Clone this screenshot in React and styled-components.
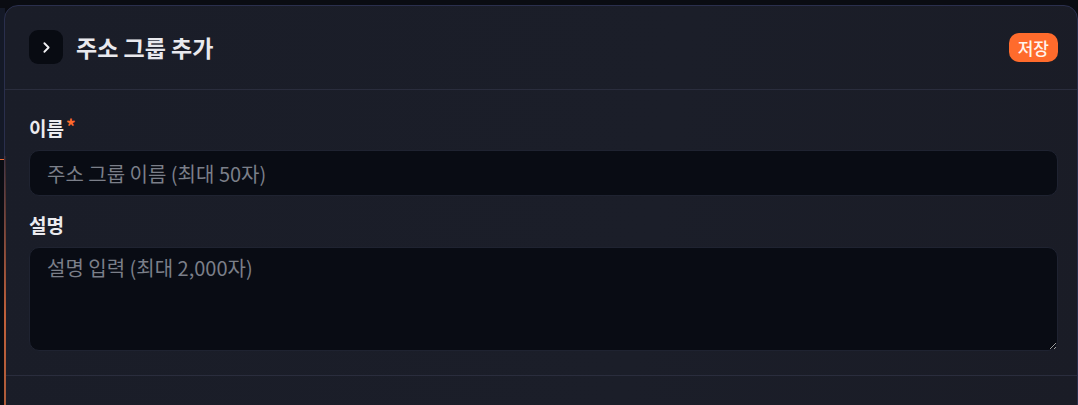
import React from 'react';
import styled, { createGlobalStyle } from 'styled-components';
import { ChevronRight } from 'lucide-react';

const Global = createGlobalStyle`
  html, body {
    margin: 0;
    padding: 0;
    background: #0a0c12;
    height: 405px;
    overflow: hidden;
  }
  * { box-sizing: border-box; }
  body {
    font-family: "Noto Sans CJK KR", "Noto Sans", sans-serif;
  }
`;

const Stage = styled.div`
  position: relative;
  width: 1078px;
  height: 405px;
  padding: 5px 0 0 4px;
`;

// piece of the page that sits behind the panel
const Behind = styled.div`
  position: absolute;
  left: 0;
  top: 8px;
  width: 5px;
  height: 152px;
  background: #141927;
  border-bottom: 1px solid #f06a30;
`;

const Panel = styled.section`
  position: relative;
  height: 420px;
  background: linear-gradient(100deg, #1a1d28 0%, #1b1e29 60%, #1a1c26 100%);
  border: 1px solid #2a2f4d;
  border-radius: 14px;
  &::before {
    content: '';
    position: absolute;
    left: -1px;
    top: 150px;
    width: 2px;
    bottom: 0;
    background: linear-gradient(180deg, rgba(240,106,48,0.1), #c0603a 60%, #a85a3a);
  }
`;

const Header = styled.header`
  display: flex;
  align-items: center;
  justify-content: space-between;
  padding: 24px 19px 25px 24px;
  border-bottom: 1px solid #2a2d3d;
`;

const TitleRow = styled.div`
  display: flex;
  align-items: center;
  gap: 13px;
`;

const IconBox = styled.div`
  width: 34px;
  height: 34px;
  border-radius: 9px;
  background: #080b12;
  display: flex;
  align-items: center;
  justify-content: center;
  color: #f2f2f5;
`;

const Title = styled.h2`
  margin: 0;
  font-size: 23px;
  font-weight: 700;
  line-height: 30px;
  color: #e9e9ee;
`;

const SaveButton = styled.button`
  border: none;
  background: #ff6b2c;
  color: #fff4ee;
  font-family: inherit;
  font-size: 17px;
  font-weight: 500;
  height: 29px;
  padding: 0 9px;
  border-radius: 10px;
`;

const Body = styled.div`
  display: flex;
  flex-direction: column;
  padding: 26px 19px 24px 24px;
  border-bottom: 1px solid #2a2d3d;
`;

const Label = styled.label`
  display: flex;
  align-items: center;
  gap: 2px;
  font-size: 19px;
  font-weight: 700;
  line-height: 24px;
  height: 24px;
  color: #ebebef;
  margin-top: ${p => (p.$first ? '0' : '17px')};
  margin-bottom: 10px;
`;

const Required = styled.span`
  color: #ff6b2c;
  font-size: 19px;
  margin-top: -4px;
`;

const fieldBase = `
  display: block;
  width: 100%;
  background: #090c14;
  border: 1px solid #1f2331;
  border-radius: 10px;
  color: #e0e0e6;
  font-family: "Noto Sans CJK KR", "Noto Sans", sans-serif;
  font-size: 20px;
  outline: none;
  padding: 0 17px;
  &::placeholder { color: #7b7f89; }
`;

const Input = styled.input`
  ${fieldBase}
  height: 46px;
  flex: none;
`;

const TextArea = styled.textarea`
  ${fieldBase}
  height: 104px;
  flex: none;
  padding-top: 6px;
  line-height: 28px;
  resize: vertical;
`;

export default function App() {
  return (
    <>
      <Global />
      <Stage>
        <Behind />
        <Panel>
          <Header>
            <TitleRow>
              <IconBox>
                <ChevronRight size={17} strokeWidth={2.6} />
              </IconBox>
              <Title>주소 그룹 추가</Title>
            </TitleRow>
            <SaveButton>저장</SaveButton>
          </Header>
          <Body>
            <Label $first>
              이름<Required>*</Required>
            </Label>
            <Input placeholder="주소 그룹 이름 (최대 50자)" />
            <Label>설명</Label>
            <TextArea placeholder="설명 입력 (최대 2,000자)" />
          </Body>
        </Panel>
      </Stage>
    </>
  );
}
